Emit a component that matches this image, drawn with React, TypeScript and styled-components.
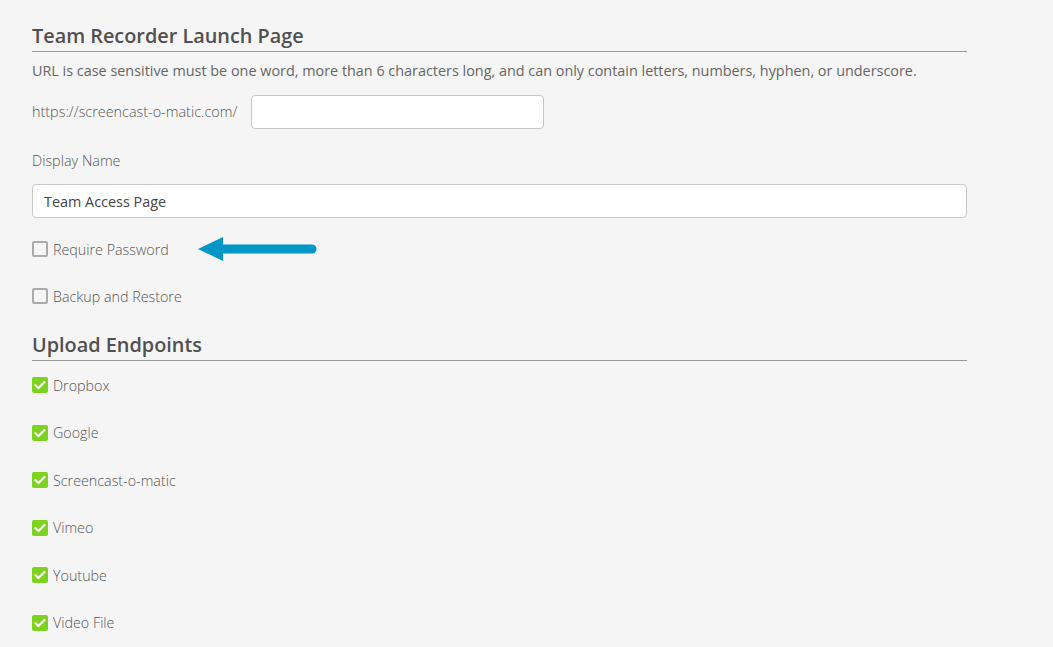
import React from "react";
import styled, { createGlobalStyle } from "styled-components";

const GlobalStyle = createGlobalStyle`
  html, body {
    margin: 0;
    padding: 0;
    background: #f5f5f5;
    font-family: "Open Sans", "Liberation Sans", sans-serif;
  }
`;

const Page = styled.div`
  padding: 22px 0 0 32px;
  width: 935px;
`;

const SectionHeading = styled.h2`
  margin: 0;
  font-size: 19.85px;
  line-height: 28px;
  font-weight: 600;
  color: #505050;
  border-bottom: 1px solid #999;
  padding-bottom: 1px;
`;

const Hint = styled.p`
  margin: 9px 0 0;
  font-size: 14.4px;
  line-height: 20px;
  color: #666;
`;

const UrlRow = styled.div`
  display: flex;
  align-items: center;
  gap: 14px;
  margin-top: 14px;
`;

const Label = styled.label<{ $top?: number }>`
  display: block;
  font-size: 14.4px;
  font-weight: 300;
  line-height: 20px;
  color: #555;
  margin-top: ${(p) => p.$top ?? 0}px;
`;

const TextInput = styled.input<{ $width?: string; $top?: number }>`
  box-sizing: border-box;
  display: block;
  width: ${(p) => p.$width ?? "100%"};
  height: 34px;
  margin-top: ${(p) => p.$top ?? 0}px;
  padding: 0 11px;
  border: 1px solid #c8c8c8;
  border-radius: 4px;
  background: #fff;
  font-family: inherit;
  font-size: 14.4px;
  color: #444;
  outline: none;
`;

const CheckRow = styled.div<{ $top: number }>`
  display: flex;
  align-items: center;
  gap: 5px;
  height: 20px;
  margin-top: ${(p) => p.$top}px;
  font-size: 14.3px;
  font-weight: 300;
  color: #555;
`;

const Box = styled.span<{ $checked?: boolean }>`
  box-sizing: border-box;
  width: 16px;
  height: 16px;
  border-radius: 2px;
  display: inline-flex;
  align-items: center;
  justify-content: center;
  background: ${(p) => (p.$checked ? "#7ed321" : "#f5f5f5")};
  border: ${(p) => (p.$checked ? "none" : "2px solid #ababab")};
`;

const Arrow = () => (
  <svg width="122" height="28" viewBox="0 0 122 28" style={{ marginLeft: 22 }}>
    <polygon points="2,14 27,2 27,26" fill="#0096c7" />
    <line x1="25" y1="14" x2="116" y2="14" stroke="#0096c7" strokeWidth="9" strokeLinecap="round" />
  </svg>
);

const Check = ({ checked }: { checked?: boolean }) => (
  <Box $checked={checked}>
    {checked && (
      <svg width="12" height="10" viewBox="0 0 12 10">
        <path d="M1.5 5.2 L4.5 8 L10.5 2" fill="none" stroke="#fff" strokeWidth="2.2" strokeLinecap="round" strokeLinejoin="round" />
      </svg>
    )}
  </Box>
);

const SecondHeading = styled(SectionHeading)`
  margin-top: 25px;
`;

const endpoints = ["Dropbox", "Google", "Screencast-o-matic", "Vimeo", "Youtube", "Video File"];

export default function App() {
  return (
    <Page>
      <GlobalStyle />
      <SectionHeading>Team Recorder Launch Page</SectionHeading>
      <Hint>
        URL is case sensitive must be one word, more than 6 characters long, and can only contain letters,
        numbers, hyphen, or underscore.
      </Hint>
      <UrlRow>
        <Label>https://screencast-o-matic.com/</Label>
        <TextInput $width="293px" />
      </UrlRow>
      <Label $top={22}>Display Name</Label>
      <TextInput $top={13} defaultValue="Team Access Page" />
      <CheckRow $top={21}>
        <Check />
        Require Password
        <Arrow />
      </CheckRow>
      <CheckRow $top={27}>
        <Check />
        Backup and Restore
      </CheckRow>
      <SecondHeading>Upload Endpoints</SecondHeading>
      {endpoints.map((name, i) => (
        <CheckRow key={name} $top={i === 0 ? 14 : 27.5}>
          <Check checked />
          {name}
        </CheckRow>
      ))}
    </Page>
  );
}
